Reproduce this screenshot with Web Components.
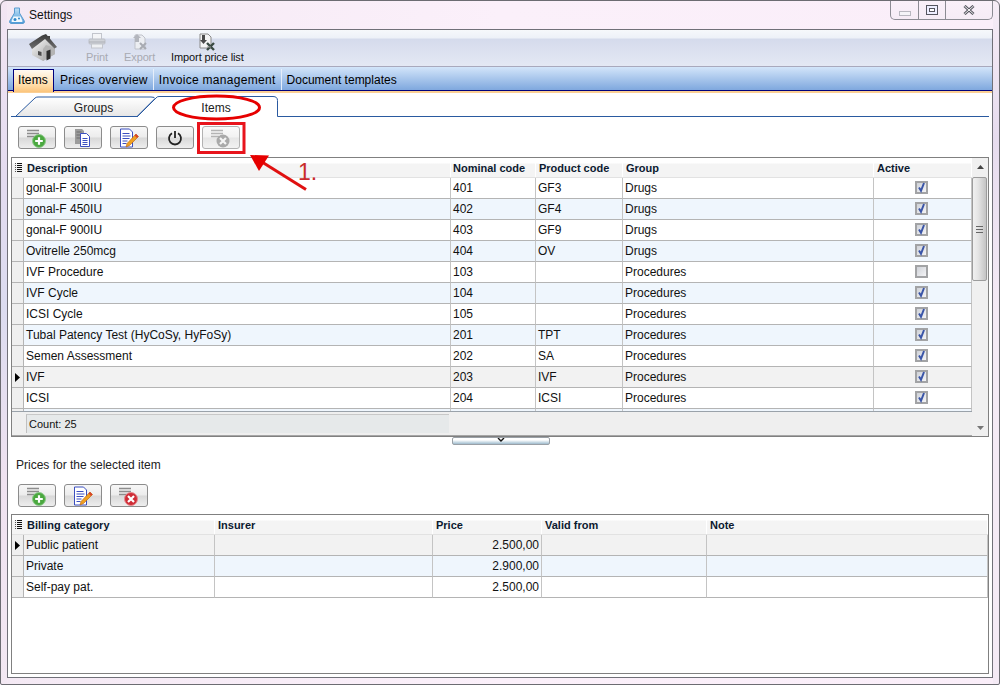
<!DOCTYPE html>
<html lang="en">
<head>
<meta charset="utf-8">
<title>Settings</title>
<style>
  html, body { margin: 0; padding: 0; height: 100%; overflow: hidden; background: #f8eef8; }
  body { font: 12px "Liberation Sans", Arial, sans-serif; color: #000; }
</style>
</head>
<body>
<settings-window>
  <title-bar slot="title">Settings</title-bar>

  <ribbon-bar slot="ribbon">
    <ribbon-item icon="home"></ribbon-item>
    <ribbon-item icon="print" label="Print" disabled></ribbon-item>
    <ribbon-item icon="export" label="Export" disabled></ribbon-item>
    <ribbon-item icon="import" label="Import price list"></ribbon-item>
  </ribbon-bar>

  <tab-strip slot="tabs" tabs="Items|Prices overview|Invoice management|Document templates" active="0"></tab-strip>

  <sub-tabs></sub-tabs>

  <tool-bar style="margin-top:9px">
    <tool-button icon="add"></tool-button>
    <tool-button icon="copy"></tool-button>
    <tool-button icon="edit"></tool-button>
    <tool-button icon="power"></tool-button>
    <tool-button icon="remove-off" disabled></tool-button>
  </tool-bar>

  <data-grid style="margin-top:8px;height:280px" scroll
    cols="427px 85px 87px 251px 98px"
    headers="Description|Nominal code|Product code|Group|Active">
    <grid-row cells="gonal-F 300IU|401|GF3|Drugs|[x]"></grid-row>
    <grid-row alt cells="gonal-F 450IU|402|GF4|Drugs|[x]"></grid-row>
    <grid-row cells="gonal-F 900IU|403|GF9|Drugs|[x]"></grid-row>
    <grid-row alt cells="Ovitrelle 250mcg|404|OV|Drugs|[x]"></grid-row>
    <grid-row cells="IVF Procedure|103||Procedures|[ ]"></grid-row>
    <grid-row alt cells="IVF Cycle|104||Procedures|[x]"></grid-row>
    <grid-row cells="ICSI Cycle|105||Procedures|[x]"></grid-row>
    <grid-row alt cells="Tubal Patency Test (HyCoSy, HyFoSy)|201|TPT|Procedures|[x]"></grid-row>
    <grid-row cells="Semen Assessment|202|SA|Procedures|[x]"></grid-row>
    <grid-row current cells="IVF|203|IVF|Procedures|[x]"></grid-row>
    <grid-row cells="ICSI|204|ICSI|Procedures|[x]"></grid-row>
    <grid-row alt cells="||||"></grid-row>
    <grid-footer slot="footer">Count: 25</grid-footer>
  </data-grid>

  <split-handle></split-handle>

  <section-caption>Prices for the selected item</section-caption>

  <tool-bar style="margin-top:12px">
    <tool-button icon="add"></tool-button>
    <tool-button icon="edit"></tool-button>
    <tool-button icon="remove"></tool-button>
  </tool-bar>

  <data-grid style="margin-top:7px;flex:1;margin-bottom:3px"
    cols="191px 218px 109px 165px 281px"
    headers="Billing category|Insurer|Price|Valid from|Note">
    <grid-row current cells="Public patient||2.500,00||" right="2"></grid-row>
    <grid-row alt cells="Private||2.900,00||" right="2"></grid-row>
    <grid-row cells="Self-pay pat.||2.500,00||" right="2"></grid-row>
  </data-grid>

  <note-layer slot="overlay"></note-layer>
</settings-window>

<script>
const ICONS = {
  flask: `<svg width="16" height="17" viewBox="0 0 16 17"><defs><linearGradient id="fl" x1="0" y1="0" x2="0" y2="1"><stop offset="0" stop-color="#bfe0f6"/><stop offset="1" stop-color="#4c9bd8"/></linearGradient></defs><path d="M5.500 1h5v5l4.800 8q.7 2-1.300 2.500H2q-2-.5-1.300-2.500L5.500 6z" fill="url(#fl)" stroke="#5a9bcf"/><path d="M4.500 9.500h7l2 4.500q.2 1-.8 1H3.300q-1 0-.8-1z" fill="#f2f9fe"/><circle cx="6" cy="12.500" r="1.500" fill="#2f86c8"/><circle cx="10" cy="11.500" r="1" fill="#2f86c8"/></svg>`,
  home: `<svg width="30" height="30" viewBox="0 0 30 30"><defs><linearGradient id="w" x1="0" y1="0" x2="1" y2="1"><stop offset="0" stop-color="#fafafa"/><stop offset="1" stop-color="#9a9a9a"/></linearGradient><linearGradient id="r" x1="0" y1="0" x2="0" y2="1"><stop offset="0" stop-color="#3a3a3a"/><stop offset="1" stop-color="#6e6e6e"/></linearGradient></defs><path d="M4 13L17 5l10 9v7L15 28 4 22z" fill="url(#w)"/><path d="M15 16l3-4 9 3v6L15 28z" fill="#b4b4b4"/><path d="M19 3h3v6l-3-3z" fill="#444"/><path d="M1 11L14 2.500 18 1l11 13-2.500 1.500L17 6 4 16z" fill="url(#r)"/><path d="M18.500 18l4-1.500v9l-4 2z" fill="#2e2e2e"/><path d="M10 18l3.500 1v4L10 22z" fill="#4c4c4c"/></svg>`,
  print: `<svg width="18" height="16" viewBox="0 0 18 16"><rect x="4.500" y=".5" width="9" height="6" fill="#f4f5f7" stroke="#c2c5cc"/><rect x="1" y="6" width="16" height="5" rx="1" fill="#cfd2d8" stroke="#bcbfc6"/><path d="M1 9h16" stroke="#adb0b7"/><rect x="3.500" y="11" width="11" height="4" fill="#eef0f3" stroke="#c2c5cc"/></svg>`,
  export: `<svg width="18" height="18" viewBox="0 0 18 18"><path d="M4 2h7l3 3v11H4z" fill="#eceef2" stroke="#bfc2c9"/><path d="M6 1l4 4H8v4H4V5H2z" fill="#b3b6bd"/><path d="M9 10l6 6m0-6l-6 6" stroke="#a8abb2" stroke-width="2"/></svg>`,
  import: `<svg width="18" height="18" viewBox="0 0 18 18"><path d="M2 1h8l3 3v11H2z" fill="#f5f5f5" stroke="#8a8a8a"/><path d="M4 2h3v5h2l-3.500 4L2 7h2z" fill="#4a4a4a"/><path d="M9 10l7 7m0-7l-7 7" stroke="#3a4a42" stroke-width="2.400"/><path d="M9 14h4" stroke="#999"/></svg>`,
  add: `<svg width="24" height="20" viewBox="0 0 24 20"><path d="M2 2.500h12M2 5.500h12M2 8.500h8" stroke="#8d8d8d" stroke-width="1.600"/><circle cx="14" cy="13" r="6.500" fill="#4aa83f" stroke="#8cc98a"/><path d="M14 9.200v7.600M10.200 13h7.600" stroke="#fff" stroke-width="2.200"/></svg>`,
  copy: `<svg width="20" height="20" viewBox="0 0 20 20"><path d="M2 1h7l2 2v13H2z" fill="#9c9c9c"/><path d="M3.500 4h5M3.500 7h5M3.500 10h5" stroke="#6a6a6a"/><path d="M7.500 5.500h6l3 3v10h-9z" fill="#fff" stroke="#3b4fc0"/><path d="M9.500 10.500h5M9.500 12.500h5M9.500 14.500h5M9.500 16.500h5" stroke="#3b4fc0"/></svg>`,
  edit: `<svg width="22" height="20" viewBox="0 0 22 20"><path d="M2.500 1h9l3 3v15h-12z" fill="#fff" stroke="#3b4fc0"/><path d="M4.500 5.500h7M4.500 8h8M4.500 10.500h7M4.500 13h5M4.500 15.500h4" stroke="#3b4fc0"/><path d="M18 6l2.500 2.500-9 9L8 19l1-3.500z" fill="#f0a020" stroke="#b55f10" stroke-width=".6"/><path d="M18 6l2.500 2.500-1.500 1.500L16.500 7.500z" fill="#d8432a"/></svg>`,
  power: `<svg width="16" height="16" viewBox="0 0 16 16"><path d="M5 3.300a6 6 0 1 0 6 0" fill="none" stroke="#222" stroke-width="1.800"/><path d="M8 1v7" stroke="#222" stroke-width="1.800"/></svg>`,
  'remove-off': `<svg width="24" height="20" viewBox="0 0 24 20"><path d="M2 2.500h12M2 5.500h12M2 8.500h8" stroke="#b4b4b4" stroke-width="1.600"/><circle cx="14" cy="13" r="6.500" fill="#a9a9a9"/><path d="M11 10l6 6m0-6l-6 6" stroke="#f4f4f4" stroke-width="2.200"/></svg>`,
  remove: `<svg width="24" height="20" viewBox="0 0 24 20"><path d="M2 2.500h12M2 5.500h12M2 8.500h8" stroke="#8d8d8d" stroke-width="1.600"/><circle cx="14" cy="13" r="6.500" fill="#cf2c36" stroke="#e58a8f"/><path d="M11 10l6 6m0-6l-6 6" stroke="#fff" stroke-width="2.200"/></svg>`,
  list: `<svg width="7" height="9" viewBox="0 0 7 9"><path d="M0 .5h1M0 2.500h1M0 4.500h1M0 6.500h1M0 8.500h1" stroke="#555"/><path d="M2 .5h5M2 2.500h5M2 4.500h5M2 6.500h5M2 8.500h5" stroke="#111"/></svg>`,
  check: `<svg width="13" height="13" viewBox="0 0 13 13"><path d="M4 6.500l2 3.300L9 2" fill="none" stroke="#3a55a8" stroke-width="2"/></svg>`
};

class SettingsWindow extends HTMLElement {
  constructor() {
    super();
    this.attachShadow({ mode: 'open' }).innerHTML = `
      <style>
        :host {
          position: relative;
          display: flex;
          flex-direction: column;
          box-sizing: border-box;
          width: 1000px;
          height: 685px;
          border: 1px solid #6c6c72;
          border-radius: 6px 6px 2px 2px;
          background:
            linear-gradient(180deg, #f3e6f3 0, #e4dcf0 25%, #dcdcf0 45%, #efe2f0 70%, #f3e8f3 100%) left / 6px 100% no-repeat,
            linear-gradient(180deg, #f6ecf6 0, #e6dcee 20%, #f4eaf5 45%, #f4eaf5 100%) right / 6px 100% no-repeat,
            linear-gradient(90deg, #f4e9f4, #fbf0fa 50%, #faeef9);
        }
        .panel {
          flex: 1;
          display: flex;
          flex-direction: column;
          min-height: 0;
          margin: 0 6px 6px;
          border: 1px solid #707078;
          background: #fff;
        }
        .body {
          flex: 1;
          display: flex;
          flex-direction: column;
          min-height: 0;
          padding: 3px 3px 0;
        }
      </style>
      <slot name="title"></slot>
      <div class="panel">
        <slot name="ribbon"></slot>
        <slot name="tabs"></slot>
        <div class="body"><slot></slot></div>
      </div>
      <slot name="overlay"></slot>
    `;
  }
}

class TitleBar extends HTMLElement {
  constructor() {
    super();
    this.attachShadow({ mode: 'open' }).innerHTML = `
      <style>
        :host { display: flex; height: 28px; padding-left: 8px; padding-right: 6px; font-size: 12px; color: #111; }
        .ico { margin-top: 6px; margin-right: 4px; height: 17px; }
        .name { margin-top: 7px; line-height: 15px; }
        .ctl {
          display: flex;
          margin-left: auto;
          height: 18px;
          border: 1px solid #8b8b93;
          border-top: 0;
          border-radius: 0 0 5px 5px;
          background: linear-gradient(#f9f0f9, #f5ecf6);
        }
        .ctl div { display: flex; align-items: center; justify-content: center; border-right: 1px solid #8b8b93; }
        .ctl div:last-child { border-right: 0; }
      </style>
      <div class="ico">${ICONS.flask}</div>
      <div class="name"><slot></slot></div>
      <div class="ctl">
        <div style="width:27px"><svg width="12" height="6" style="margin-top:7px"><rect x=".5" y=".5" width="11" height="4" fill="#f4f4f8" stroke="#b8b8c0"/></svg></div>
        <div style="width:26px"><svg width="12" height="10"><rect x=".5" y=".5" width="11" height="9" fill="#eef" stroke="#55555f"/><rect x="3.500" y="3.500" width="5" height="3" fill="#fff" stroke="#55555f"/></svg></div>
        <div style="width:46px"><svg width="12" height="10" viewBox="0 0 12 10"><path d="M1.500 1l9 8m0-8l-9 8" stroke="#5a5a64" stroke-width="3"/><path d="M1.500 1l9 8m0-8l-9 8" stroke="#f4f4f4" stroke-width="1"/></svg></div>
      </div>
    `;
  }
}

class RibbonBar extends HTMLElement {
  constructor() {
    super();
    this.attachShadow({ mode: 'open' }).innerHTML = `
      <style>
        :host {
          display: flex;
          gap: 16px;
          box-sizing: border-box;
          height: 37px;
          padding: 3px 0 0 20px;
          border-bottom: 1px solid #a9a9bd;
          background: linear-gradient(#f6f8fb 0, #edf1f8 8px, #d5dbec 9px, #e4e8f4 100%);
        }
      </style>
      <slot></slot>
    `;
  }
}

class RibbonItem extends HTMLElement {
  constructor() {
    super();
    const label = this.getAttribute('label') || '';
    this.attachShadow({ mode: 'open' }).innerHTML = `
      <style>
        :host { display: flex; flex-direction: column; align-items: center; font-size: 11px; letter-spacing: -.12px; color: #111; }
        :host([disabled]) { color: #a8aab2; }
        :host([icon="home"]) { margin-right: 12px; }
        .i { height: 17px; display: flex; justify-content: center; }
        :host([icon="home"]) .i { height: 30px; }
        .t { margin-top: 1px; line-height: 13px; white-space: nowrap; }
      </style>
      <div class="i">${ICONS[this.getAttribute('icon')]}</div>
      ${label ? `<div class="t">${label}</div>` : ''}
    `;
  }
}

class TabStrip extends HTMLElement {
  constructor() {
    super();
    const active = Number(this.getAttribute('active'));
    const tabs = this.getAttribute('tabs').split('|').map((t, i) =>
      `<div class="tab${i === active ? ' on' : ''}">${t}</div>`).join('');
    this.attachShadow({ mode: 'open' }).innerHTML = `
      <style>
        :host {
          display: flex;
          box-sizing: border-box;
          height: 26px;
          padding: 2px 0 0 5px;
          border-bottom: 2px solid #fbcf94;
          background: linear-gradient(#d3e5fa, #7fa8de) 0 0 / 100% 23px no-repeat;
          font-size: 12px;
          position: relative;
        }
        :host::after {
          content: "";
          position: absolute;
          left: 0; right: 0; bottom: 0;
          height: 1px;
          background: #00007c;
        }
        .tab {
          box-sizing: border-box;
          height: 21px;
          line-height: 20px;
          padding: 1px 5px 0 5px;
          border-right: 1px solid #e6eefa;
          white-space: nowrap;
          color: #000;
        }
        .tab:nth-child(2) { letter-spacing: .1px; }
        .tab:nth-child(3) { letter-spacing: .25px; }
        .tab:nth-child(4) { letter-spacing: .3px; }
        .tab:last-child { border-right: 0; }
        .on {
          position: relative;
          z-index: 1;
          width: 41px;
          height: 23px;
          margin-right: 1px;
          padding: 0 4px;
          letter-spacing: .2px;
          border: 1px solid #00007c;
          border-bottom: 0;
          background: linear-gradient(#fffaf2, #ffdca6 70%, #fbc47c);
        }
      </style>
      ${tabs}
    `;
  }
}

class SubTabs extends HTMLElement {
  constructor() {
    super();
    this.attachShadow({ mode: 'open' }).innerHTML = `
      <style>
        :host { display: flex; position: relative; height: 21px; margin-right: -1px; font-size: 12px; color: #222; }
        svg { position: absolute; left: 0; top: 0; }
        .lab { position: relative; text-align: center; line-height: 24px; }
      </style>
      <svg width="979" height="21" viewBox="0 0 979 21">
        <defs><linearGradient id="g" x1="0" y1="0" x2="0" y2="1"><stop offset="0" stop-color="#fff"/><stop offset="1" stop-color="#e6e6e6"/></linearGradient></defs>
        <path d="M4.500 20.500L24 2Q25 1 27 1H140Q144 1 144 2.500L126 20.500z" fill="url(#g)" stroke="#2a5aa0"/>
        <path d="M126.500 20.500L145 2Q146 .5 148 .5H262Q266.500 .5 266.500 4.500V20.500H978" fill="#fff" stroke="#2a5aa0"/>
        <path d="M0 20.500h127" stroke="#2a5aa0"/>
      </svg>
      <div class="lab" style="width:165px">Groups</div>
      <div class="lab" style="width:80px">Items</div>
    `;
  }
}

class ToolBar extends HTMLElement {
  constructor() {
    super();
    this.attachShadow({ mode: 'open' }).innerHTML = `
      <style>:host { display: flex; gap: 8px; padding-left: 7px; height: 23px; }</style>
      <slot></slot>
    `;
  }
}

class ToolButton extends HTMLElement {
  constructor() {
    super();
    this.attachShadow({ mode: 'open' }).innerHTML = `
      <style>
        :host {
          display: flex;
          align-items: center;
          justify-content: center;
          box-sizing: border-box;
          width: 38px;
          height: 23px;
          border: 1px solid #8c8c8c;
          border-radius: 3px;
          background: linear-gradient(#f7f7f7, #ececec 48%, #d8d8d8 52%, #eeeeee);
        }
        :host([disabled]) { border-color: #b2b2b2; background: linear-gradient(#fafafa, #f2f2f2 48%, #e6e6e6 52%, #f2f2f2); }
        svg { display: block; }
      </style>
      ${ICONS[this.getAttribute('icon')]}
    `;
  }
}

class DataGrid extends HTMLElement {
  constructor() {
    super();
    const heads = this.getAttribute('headers').split('|').map(h => `<div class="h">${h}</div>`).join('');
    this.attachShadow({ mode: 'open' }).innerHTML = `
      <style>
        :host {
          display: flex;
          flex-direction: column;
          box-sizing: border-box;
          border: 1px solid #808080;
          overflow: hidden;
          background: #fff;
          --cols: ${this.getAttribute('cols')};
        }
        .wrap { flex: 1; display: flex; min-height: 0; }
        .main { flex: 1; display: flex; flex-direction: column; min-width: 0; }
        .head {
          display: grid;
          grid-template-columns: 12px var(--cols);
          height: 19px;
          flex: none;
          border-bottom: 1px solid #e2e2e2;
          background: linear-gradient(#fff 0, #fff 5px, #f4f4f4 6px, #f4f4f4);
          font-weight: bold;
          font-size: 11px;
          color: #0c1a30;
        }
        .h { padding-left: 3px; line-height: 20px; white-space: nowrap; overflow: hidden; border-right: 1px solid #fff; }
        :host([scroll]) .h:nth-child(3) { padding-left: 2px; }
        .corner { display: flex; align-items: center; justify-content: center; }
        .rows { flex: 1; overflow: hidden; min-height: 0; }
        .bar {
          flex: none;
          display: none;
          flex-direction: column;
          width: 16px;
          background: #f0f0f0;
        }
        :host([scroll]) .bar { display: flex; }
        .up, .dn { display: flex; align-items: center; justify-content: center; height: 19px; flex: none; }
        .up { padding-bottom: 2px; box-sizing: border-box; }
        .dn { margin-top: auto; padding-top: 2px; box-sizing: border-box; }
        .thumb {
          display: flex;
          align-items: center;
          justify-content: center;
          box-sizing: border-box;
          width: 15px;
          height: 104px;
          border: 1px solid #9c9c9c;
          border-radius: 2px;
          background: linear-gradient(90deg, #f0f0f0, #e4e4e4 40%, #c4c4c4);
        }
      </style>
      <div class="wrap">
        <div class="main">
          <div class="head"><div class="corner">${ICONS.list}</div>${heads}</div>
          <div class="rows"><slot></slot></div>
          <slot name="footer"></slot>
        </div>
        <div class="bar">
          <div class="up"><svg width="7" height="4"><path d="M0 4L3.500 0 7 4z" fill="#444"/></svg></div>
          <div class="thumb"><svg width="7" height="7"><path d="M0 .5h7M0 3.500h7M0 6.500h7" stroke="#666"/></svg></div>
          <div class="dn"><svg width="7" height="4"><path d="M0 0L3.500 4 7 0z" fill="#777"/></svg></div>
        </div>
      </div>
    `;
  }
}

class GridRow extends HTMLElement {
  constructor() {
    super();
    const right = this.getAttribute('right');
    const raw = this.getAttribute('cells').split('|');
    const cells = raw.map((c, i) => {
      let inner = c;
      if (c === '[x]') inner = `<span class="box">${ICONS.check}</span>`;
      if (c === '[ ]') inner = `<span class="box"></span>`;
      const box = c === '[x]' || c === '[ ]';
      return `<div class="c${box ? ' mid' : ''}${String(i) === right ? ' r' : ''}">${inner}</div>`;
    });
    const current = this.hasAttribute('current');
    this.attachShadow({ mode: 'open' }).innerHTML = `
      <style>
        :host {
          display: grid;
          grid-template-columns: 12px var(--cols);
          height: 21px;
          box-sizing: border-box;
          font-size: 12px;
          color: #111;
          background: #fff;
        }
        :host([alt]) { background: #eff6fd; }
        :host([current]) { background: #f2f2f2; }
        .rh { display: flex; align-items: center; justify-content: center; background: #efefef; border-right: 1px solid #b4b4b4; border-bottom: 1px solid #b4b4b4; }
        .c {
          box-sizing: border-box;
          padding: 0 2px;
          line-height: 20px;
          white-space: nowrap;
          overflow: hidden;
          border-right: 1px solid #c4c4c4;
          border-bottom: 1px solid #b4b4b4;
        }
        .mid { display: flex; align-items: center; justify-content: center; }
        .r { text-align: right; }
        .box {
          box-sizing: border-box;
          display: block;
          width: 13px;
          height: 13px;
          margin: 0 2px 2px 0;
          border: 2px solid #a2a3a5;
          outline: 0;
          background: linear-gradient(135deg, #cfd2d8, #f4f4f6);
          position: relative;
        }
        .box svg { position: absolute; left: -2px; top: -2px; }
      </style>
      <div class="rh">${current ? '<svg width="5" height="9"><path d="M0 0l5 4.500L0 9z" fill="#000"/></svg>' : ''}</div>
      ${cells.join('')}
    `;
  }
}

class GridFooter extends HTMLElement {
  constructor() {
    super();
    this.attachShadow({ mode: 'open' }).innerHTML = `
      <style>
        :host {
          flex: none;
          display: flex;
          box-sizing: border-box;
          height: 25px;
          padding: 2px 0 1px 14px;
          border-top: 1px solid #9aa2aa;
          border-bottom: 1px solid #a6a6a6;
          background: #efefef;
          font-size: 11px;
          color: #111;
        }
        .count {
          box-sizing: border-box;
          width: 423px;
          height: 19px;
          padding-left: 2px;
          line-height: 19px;
          border-left: 1px solid #c0c0c0;
          border-top: 1px solid #c8c8c8;
          background: #e6e9ea;
        }
      </style>
      <div class="count"><slot></slot></div>
    `;
  }
}

class SplitHandle extends HTMLElement {
  constructor() {
    super();
    this.attachShadow({ mode: 'open' }).innerHTML = `
      <style>
        :host { display: flex; justify-content: center; height: 8px; }
        .grip {
          box-sizing: border-box;
          display: flex;
          justify-content: center;
          width: 98px;
          height: 8px;
          margin-left: 2px;
          border: 1px solid #9aa0a6;
          border-radius: 2px;
          background: linear-gradient(#fff 0, #fff 2px, #b6cddb 5px, #9fb9ca);
        }
      </style>
      <div class="grip"><svg width="8" height="5"><path d="M1 0l3 3 3-3" fill="none" stroke="#111" stroke-width="1.400"/></svg></div>
    `;
  }
}

class SectionCaption extends HTMLElement {
  constructor() {
    super();
    this.attachShadow({ mode: 'open' }).innerHTML = `
      <style>:host { display: block; margin-top: 13px; padding-left: 5px; height: 14px; line-height: 14px; font-size: 12px; color: #222; }</style>
      <slot></slot>
    `;
  }
}

class NoteLayer extends HTMLElement {
  constructor() {
    super();
    this.attachShadow({ mode: 'open' }).innerHTML = `
      <style>
        :host { position: absolute; left: -1px; top: -1px; width: 1000px; height: 685px; pointer-events: none; }
        svg { position: absolute; left: 0; top: 0; }
        .num { position: absolute; left: 298px; top: 159px; font-size: 23px; line-height: 26px; color: #c92a2a; }
      </style>
      <svg width="1000" height="685">
        <ellipse cx="216.500" cy="107.500" rx="43" ry="11.500" fill="none" stroke="#e60000" stroke-width="3"/>
        <rect x="198.500" y="123.500" width="45.500" height="29" fill="none" stroke="#e8141c" stroke-width="3"/>
        <path d="M306 189.500L262 162" stroke="#e01010" stroke-width="3" fill="none"/>
        <path d="M250 155L269 155.500 259 171z" fill="#e60000"/>
      </svg>
      <div class="num">1.</div>
    `;
  }
}

customElements.define('settings-window', SettingsWindow);
customElements.define('title-bar', TitleBar);
customElements.define('ribbon-bar', RibbonBar);
customElements.define('ribbon-item', RibbonItem);
customElements.define('tab-strip', TabStrip);
customElements.define('sub-tabs', SubTabs);
customElements.define('tool-bar', ToolBar);
customElements.define('tool-button', ToolButton);
customElements.define('data-grid', DataGrid);
customElements.define('grid-row', GridRow);
customElements.define('grid-footer', GridFooter);
customElements.define('split-handle', SplitHandle);
customElements.define('section-caption', SectionCaption);
customElements.define('note-layer', NoteLayer);
</script>
</body>
</html>
